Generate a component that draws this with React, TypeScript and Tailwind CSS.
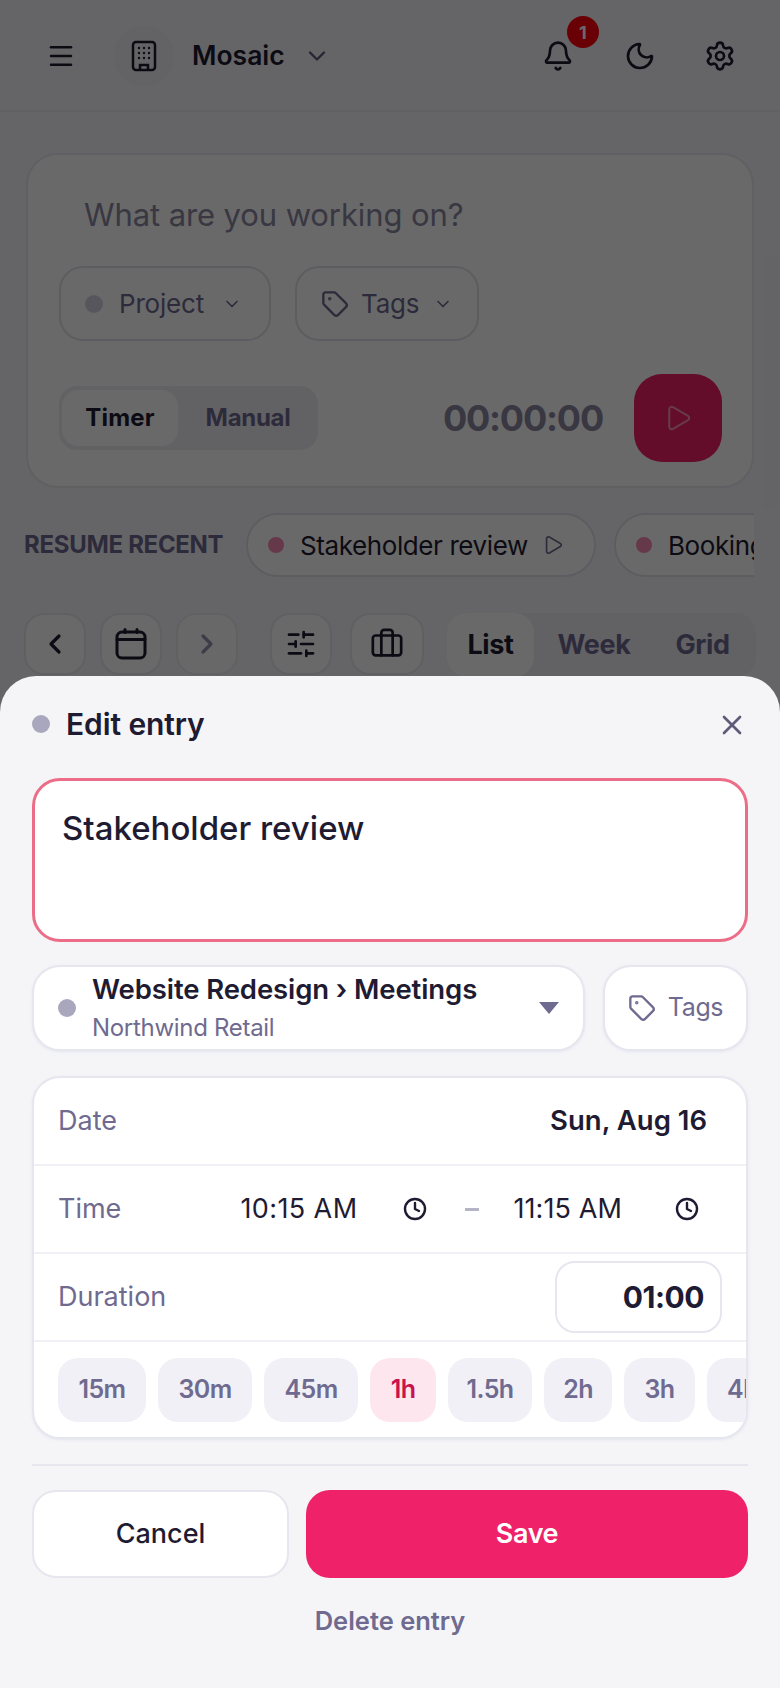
import React from "react";
import {
  Bell,
  Briefcase,
  ChevronDown,
  ChevronLeft,
  ChevronRight,
  Clock,
  Menu,
  Moon,
  Play,
  Settings,
  SlidersHorizontal,
  Tag,
  X,
} from "lucide-react";

const CHIPS = [
  { label: "15m", width: "w-[88px]" },
  { label: "30m", width: "w-[94px]" },
  { label: "45m", width: "w-[94px]" },
  { label: "1h", width: "w-[66px]", active: true },
  { label: "1.5h", width: "w-[84px]" },
  { label: "2h", width: "w-[68px]" },
  { label: "3h", width: "w-[71px]" },
  { label: "4h", width: "w-[71px]" },
];

function BuildingIcon() {
  return (
    <svg width="26" height="32" viewBox="0 0 26 32" fill="none" stroke="currentColor" strokeWidth="2.5">
      <rect x="2" y="2" width="22" height="28" rx="3" />
      <path d="M9 30v-5h8v5" />
      <g fill="currentColor" stroke="none">
        <circle cx="8" cy="8" r="1.2" />
        <circle cx="13" cy="8" r="1.2" />
        <circle cx="18" cy="8" r="1.2" />
        <circle cx="8" cy="13" r="1.2" />
        <circle cx="13" cy="13" r="1.2" />
        <circle cx="18" cy="13" r="1.2" />
        <circle cx="8" cy="18" r="1.2" />
        <circle cx="13" cy="18" r="1.2" />
        <circle cx="18" cy="18" r="1.2" />
      </g>
    </svg>
  );
}

function CalendarIcon() {
  return (
    <svg width="32" height="32" viewBox="0 0 32 32" fill="none" stroke="currentColor" strokeWidth="3" strokeLinecap="round">
      <rect x="2" y="4" width="28" height="26" rx="5" />
      <path d="M2 11.5h28M10 1.5v3M22 1.5v3" />
    </svg>
  );
}

function ToolButton({ width, children }: { width: string; children: React.ReactNode }) {
  return (
    <div className={`flex h-[62px] shrink-0 items-center justify-center rounded-[20px] border-2 border-[#e8e8f0] bg-white ${width}`}>
      {children}
    </div>
  );
}

function Row({ children }: { children: React.ReactNode }) {
  return <div className="flex h-[88px] items-center border-b-2 border-[#f0f0f6] px-6">{children}</div>;
}

export default function App() {
  return (
    <div className="relative h-[1688px] w-[780px] overflow-hidden bg-[#f5f5f9] font-['Inter',sans-serif] text-[#1e1b32]">
      {/* page behind the sheet */}
      <header className="flex h-[112px] items-center border-b-2 border-[#ececf3] pl-[46px] pr-[44px] pt-[2px]">
        <Menu size={30} strokeWidth={2} />
        <div className="ml-[38px] flex h-[60px] w-[60px] items-center justify-center rounded-full bg-[#f0f0f5]">
          <BuildingIcon />
        </div>
        <span className="ml-[18px] text-[26.5px] font-semibold">Mosaic</span>
        <ChevronDown size={28} strokeWidth={2} className="ml-[18px] text-[#5f5b78]" />
        <div className="relative ml-auto">
          <Bell size={32} strokeWidth={2} />
          <span className="absolute -top-[24px] left-[25px] flex h-8 w-8 items-center justify-center rounded-full bg-[#ff0010] text-[18px] font-bold text-white">
            1
          </span>
        </div>
        <Moon size={32} strokeWidth={2} className="ml-[50px]" />
        <Settings size={32} strokeWidth={2} className="ml-[48px]" />
      </header>

      <main className="px-[26px] pt-[41px]">
        <section className="h-[335px] rounded-[32px] border-2 border-[#e8e8f0] bg-white pl-[31px] pr-[30px]">
          <p className="pl-[25px] pt-[40px] text-[31px] leading-[40px] tracking-[-0.1px] text-[#8a87a0]">What are you working on?</p>
          <div className="mt-[31px] flex gap-[24px]">
            <div className="flex h-[75px] w-[212px] items-center rounded-[24px] border-2 border-[#e2e2ec] pl-[24px] text-[26px] tracking-[-0.2px] text-[#6f6a8f]">
              <span className="h-[18px] w-[18px] rounded-full bg-[#d4d2e0]" />
              <span className="ml-[16px]">Project</span>
              <ChevronDown size={20} strokeWidth={2} className="ml-[18px]" />
            </div>
            <div className="flex h-[75px] w-[184px] items-center rounded-[24px] border-2 border-[#e2e2ec] pl-[24px] text-[26px] tracking-[-0.2px] text-[#6f6a8f]">
              <Tag size={28} strokeWidth={2} className="rotate-90 -scale-y-100" />
              <span className="ml-[12px]">Tags</span>
              <ChevronDown size={20} strokeWidth={2} className="ml-[14px]" />
            </div>
          </div>
          <div className="mt-[33px] flex items-center">
            <div className="flex h-[64px] w-[259px] items-center rounded-[18px] bg-[#eeeef4] pl-[3px]">
              <div className="flex h-[56px] w-[116px] items-center justify-center rounded-[16px] bg-white text-[24px] font-bold tracking-[0.2px]">Timer</div>
              <div className="flex flex-1 items-center justify-center text-[24px] font-bold tracking-[-0.3px] text-[#6f6a8f]">Manual</div>
            </div>
            <span className="ml-auto text-[36px] font-bold tracking-[-1.2px] text-[#8a87a0]">00:00:00</span>
            <div className="ml-[31px] flex h-[88px] w-[88px] items-center justify-center rounded-[28px] bg-[#f02068] text-[#fff]">
              <Play size={30} strokeWidth={1.6} className="opacity-50" />
            </div>
          </div>
        </section>

        <section className="mt-[25px] -ml-[2px] flex h-[64px] items-center overflow-hidden">
          <span className="w-[222px] shrink-0 text-[24px] font-bold tracking-[-0.3px] text-[#6f6a8f]">RESUME RECENT</span>
          <div className="flex h-[64px] w-[350px] shrink-0 items-center rounded-[32px] border-2 border-[#e2e2ec] bg-white pl-[20px] text-[26px] tracking-[-0.4px]">
            <span className="h-4 w-4 rounded-full bg-[#f58bb4]" />
            <span className="ml-[16px]">Stakeholder review</span>
            <Play size={22} strokeWidth={1.8} className="ml-[14px] text-[#6f6a8f]" />
          </div>
          <div className="ml-[18px] flex h-[64px] w-[300px] shrink-0 items-center rounded-[32px] border-2 border-[#e2e2ec] bg-white pl-[20px] text-[26px] tracking-[-0.4px]">
            <span className="h-4 w-4 rounded-full bg-[#f58bb4]" />
            <span className="ml-[16px]">Booking flow</span>
          </div>
        </section>

        <section className="mt-[36px] -ml-[2px] flex items-start">
          <ToolButton width="w-[62px]"><ChevronLeft size={32} strokeWidth={2.4} /></ToolButton>
          <div className="ml-[14px]"><ToolButton width="w-[62px]"><CalendarIcon /></ToolButton></div>
          <div className="ml-[14px] opacity-70"><ToolButton width="w-[62px]"><ChevronRight size={32} strokeWidth={2.4} className="text-[#6f6a8f]" /></ToolButton></div>
          <div className="ml-[32px]"><ToolButton width="w-[62px]"><SlidersHorizontal size={32} strokeWidth={2} /></ToolButton></div>
          <div className="ml-[18px]"><ToolButton width="w-[74px]"><Briefcase size={34} strokeWidth={1.9} /></ToolButton></div>
          <div className="ml-[23px] flex h-[64px] w-[309px] shrink-0 rounded-[20px] bg-[#eeeef4] text-[27px] font-bold tracking-[-0.4px]">
            <div className="flex w-[87px] items-center justify-center rounded-[20px] bg-white">List</div>
            <div className="flex w-[120px] items-center justify-center text-[#6f6a8f]">Week</div>
            <div className="flex w-[97px] items-center justify-center text-[#6f6a8f]">Grid</div>
          </div>
        </section>
      </main>

      {/* dim layer */}
      <div className="absolute inset-0 bg-black/[.59]" />

      {/* edit entry sheet */}
      <div className="absolute bottom-0 left-0 h-[1012px] w-full rounded-t-[36px] bg-[#f5f5f8] px-[32px]">
        <div className="flex h-[102px] items-center pb-[6px]">
          <span className="h-[18px] w-[18px] rounded-full bg-[#a9a7bd]" />
          <h2 className="ml-[16px] text-[30px] font-semibold tracking-[-0.1px]">Edit entry</h2>
          <X size={32} strokeWidth={2} className="ml-auto mt-[2px] text-[#5f5b78]" />
        </div>

        <div className="h-[164px] rounded-[28px] border-[3px] border-[#ec6d87] bg-white pl-[27px] pt-[25px] text-[33px] font-medium leading-[44px]">
          Stakeholder review
        </div>

        <div className="mt-[23px] flex gap-[18px]">
          <div className="flex h-[86px] w-[553px] items-center rounded-[28px] border-2 border-[#e6e6ef] bg-white pl-[24px] pr-[24px] shadow-sm shadow-[#e6e6ef]">
            <span className="h-[18px] w-[18px] rounded-full bg-[#a9a7bd]" />
            <div className="ml-[16px] flex flex-col">
              <span className="text-[27.5px] font-semibold leading-[36px] tracking-[-0.1px]">Website Redesign › Meetings</span>
              <span className="mt-[4px] text-[24px] leading-[34px] tracking-[-0.3px] text-[#6f6a8f]">Northwind Retail</span>
            </div>
            <svg width="20" height="12" viewBox="0 0 20 12" className="ml-auto fill-[#6f6a8f]">
              <path d="M0 0h20l-10 12z" />
            </svg>
          </div>
          <div className="flex h-[86px] w-[145px] items-center justify-center rounded-[28px] border-2 border-[#e6e6ef] bg-white text-[#6f6a8f] shadow-sm shadow-[#e6e6ef]">
            <Tag size={28} strokeWidth={2} className="rotate-90 -scale-y-100" />
            <span className="ml-[12px] text-[25px] tracking-[-0.4px]">Tags</span>
          </div>
        </div>

        <div className="mt-[25px] overflow-hidden rounded-[28px] border-2 border-[#e6e6ef] bg-white shadow-sm shadow-[#e6e6ef]">
          <Row>
            <span className="text-[27px] text-[#6f6a8f]">Date</span>
            <span className="ml-auto pr-[15px] text-[27.5px] font-semibold">Sun, Aug 16</span>
          </Row>
          <Row>
            <span className="text-[27px] text-[#6f6a8f]">Time</span>
            <span className="ml-auto text-[27px] tracking-[0.4px]">10:15 AM</span>
            <Clock size={24} strokeWidth={2.4} className="ml-[46px]" />
            <span className="ml-[38px] h-[3px] w-[14px] bg-[#b5b3c6]" />
            <span className="ml-[34px] text-[27px] tracking-[0.1px]">11:15 AM</span>
            <Clock size={24} strokeWidth={2.4} className="ml-[53px] mr-[23px]" />
          </Row>
          <Row>
            <span className="text-[27px] text-[#6f6a8f]">Duration</span>
            <div className="ml-auto flex h-[72px] w-[167px] items-center justify-end rounded-[20px] border-2 border-[#e6e6ef] pr-[16px] text-[30px] font-bold tracking-[-0.5px]">
              01:00
            </div>
          </Row>
          <div className="flex h-[95px] gap-[12px] overflow-hidden pl-[24px] pt-[16px]">
            {CHIPS.map((chip) => (
              <div
                key={chip.label}
                className={`flex h-[64px] shrink-0 items-center justify-center rounded-[20px] text-[25px] font-semibold tracking-[-0.6px] ${chip.width} ${
                  chip.active ? "bg-[#fde6ee] text-[#c8134f]" : "bg-[#f0f0f6] text-[#6f6a8f]"
                }`}
              >
                {chip.label}
              </div>
            ))}
          </div>
        </div>

        <div className="mt-[25px] h-[2px] bg-[#e6e6ef]" />

        <div className="mt-[24px] flex gap-[17px]">
          <div className="flex h-[88px] w-[257px] items-center justify-center rounded-[24px] border-2 border-[#e6e6ef] bg-white text-[27px] font-medium">
            Cancel
          </div>
          <div className="flex h-[88px] flex-1 items-center justify-center rounded-[24px] bg-[#ef2168] text-[27px] font-semibold tracking-[-0.4px] text-white">
            Save
          </div>
        </div>

        <p className="mt-[24px] text-center text-[25.5px] font-semibold text-[#6f6a8f]">Delete entry</p>
      </div>
    </div>
  );
}
